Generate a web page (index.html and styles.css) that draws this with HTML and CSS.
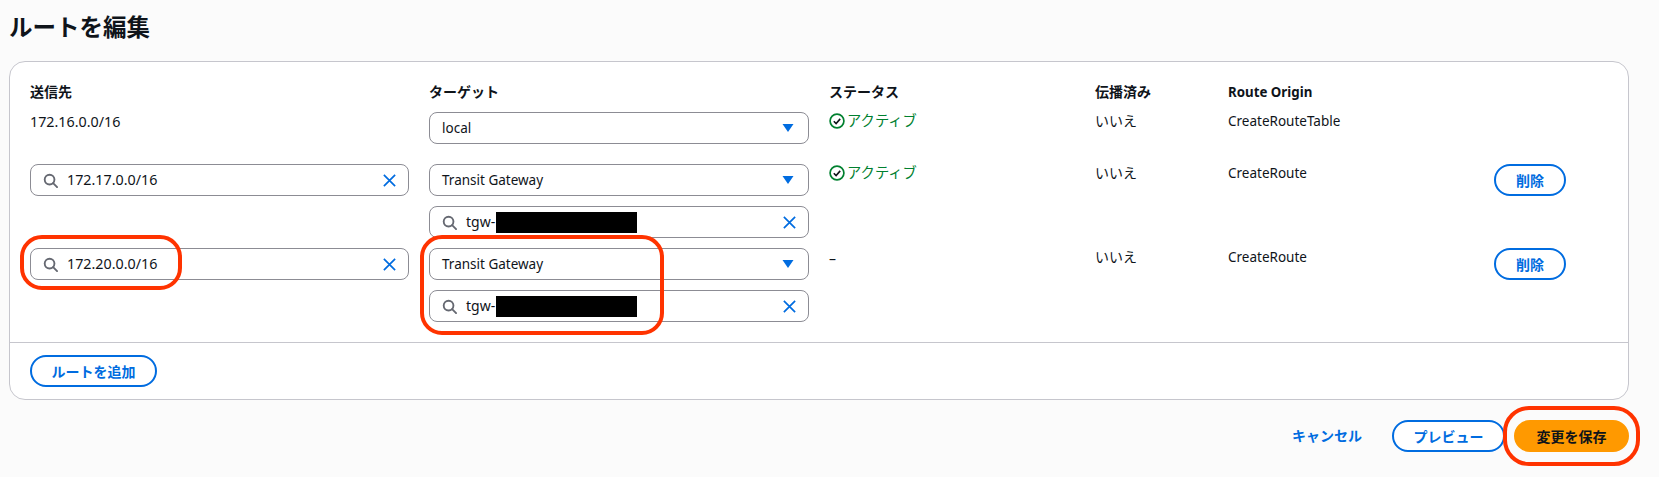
FILE: index.html
```html
<!DOCTYPE html>
<html lang="ja">
<head>
  <meta charset="UTF-8" />
  <meta name="viewport" content="width=device-width, initial-scale=1.0" />
  <title>ルートを編集</title>
  <link rel="stylesheet" href="styles.css">
</head>
<body>
  <svg class="icon-defs" width="0" height="0" aria-hidden="true">
    <symbol id="i-search" viewBox="0 0 16 16">
      <circle cx="7" cy="7" r="5.2" fill="none" stroke="currentColor" stroke-width="2" />
      <path d="M10.8 10.8L15 15" fill="none" stroke="currentColor" stroke-width="2" stroke-linecap="round" />
    </symbol>
    <symbol id="i-clear" viewBox="0 0 16 16">
      <path d="M2 2l12 12M14 2L2 14" fill="none" stroke="currentColor" stroke-width="1.8" />
    </symbol>
    <symbol id="i-caret" viewBox="0 0 12 10">
      <path d="M0.5 1h11L6 9z" fill="currentColor" />
    </symbol>
    <symbol id="i-ok" viewBox="0 0 16 16">
      <circle cx="8" cy="8" r="6.9" fill="none" stroke="currentColor" stroke-width="1.7" />
      <path d="M4.8 8.2l2.3 2.3 4.1-4.6" fill="none" stroke="#0f141a" stroke-width="1.6" />
    </symbol>
  </svg>

  <h1 class="title">ルートを編集</h1>

  <section class="card">
    <div class="routes">
      <div class="row row-head">
        <div>送信先</div>
        <div>ターゲット</div>
        <div>ステータス</div>
        <div>伝播済み</div>
        <div class="origin-head">Route Origin</div>
      </div>

      <div class="row row-first">
        <div class="cidr">172.16.0.0/16</div>
        <div class="stack">
          <div class="field select">
            <span class="value">local</span>
            <svg class="caret"><use href="#i-caret" /></svg>
          </div>
        </div>
        <div class="status"><svg class="ok"><use href="#i-ok" /></svg>アクティブ</div>
        <div class="text">いいえ</div>
        <div class="text origin">CreateRouteTable</div>
      </div>

      <div class="row">
        <div class="field">
          <svg class="search"><use href="#i-search" /></svg>
          <span class="cidr">172.17.0.0/16</span>
          <svg class="clear"><use href="#i-clear" /></svg>
        </div>
        <div class="stack">
          <div class="field select">
            <span class="value">Transit Gateway</span>
            <svg class="caret"><use href="#i-caret" /></svg>
          </div>
          <div class="field">
            <svg class="search"><use href="#i-search" /></svg>
            <span class="tgw">tgw-</span><span class="redacted"></span>
            <svg class="clear"><use href="#i-clear" /></svg>
          </div>
        </div>
        <div class="status"><svg class="ok"><use href="#i-ok" /></svg>アクティブ</div>
        <div class="text">いいえ</div>
        <div class="text origin">CreateRoute</div>
        <button class="btn btn-delete">削除</button>
      </div>

      <div class="row">
        <div class="field">
          <svg class="search"><use href="#i-search" /></svg>
          <span class="cidr">172.20.0.0/16</span>
          <svg class="clear"><use href="#i-clear" /></svg>
        </div>
        <div class="stack">
          <div class="field select">
            <span class="value">Transit Gateway</span>
            <svg class="caret"><use href="#i-caret" /></svg>
          </div>
          <div class="field">
            <svg class="search"><use href="#i-search" /></svg>
            <span class="tgw">tgw-</span><span class="redacted"></span>
            <svg class="clear"><use href="#i-clear" /></svg>
          </div>
        </div>
        <div class="dash">–</div>
        <div class="text">いいえ</div>
        <div class="text origin">CreateRoute</div>
        <button class="btn btn-delete">削除</button>
      </div>
    </div>

    <div class="card-footer">
      <button class="btn btn-add">ルートを追加</button>
    </div>
  </section>

  <div class="actions">
    <a class="cancel" href="#">キャンセル</a>
    <button class="btn btn-preview">プレビュー</button>
    <button class="btn btn-save">変更を保存</button>
  </div>

  <!-- red annotations drawn over the screenshot -->
  <div class="mark mark-dest"></div>
  <div class="mark mark-target"></div>
  <div class="mark mark-save"></div>
</body>
</html>
```

FILE: styles.css
```css
* {
  margin: 0;
  padding: 0;
  box-sizing: border-box;
}

body {
  position: relative;
  height: 477px;
  padding: 11px 30px 0 9px;
  overflow: hidden;
  background: #fbfbfb;
  color: #0f141a;
  font-family: "Noto Sans", "Noto Sans CJK JP", sans-serif;
  font-size: 14px;
  line-height: 20px;
}

.icon-defs {
  position: absolute;
}

.title {
  height: 30px;
  margin-bottom: 20px;
  font-family: "Noto Sans CJK JP", sans-serif;
  font-size: 23.5px;
  font-weight: 700;
  line-height: 30px;
}

.card {
  background: #fff;
  border: 1px solid #c6c6cd;
  border-radius: 16px;
}

.routes {
  display: flex;
  flex-direction: column;
  gap: 10px;
  padding: 20px 20px;
  border-bottom: 1px solid #c6c6cd;
}

.row {
  display: grid;
  grid-template-columns: 379px 380px 246px 113px 246px 72px;
  column-gap: 20px;
  align-items: start;
}

.row-head {
  font-weight: 700;
}

.origin-head {
  font-size: 13.3px;
}

.row-first {
  margin-bottom: 10px;
}

.cidr {
  font-size: 14.3px;
}

.text {
  margin-top: -1px;
}

.origin {
  font-size: 13.5px;
}

.dash {
  margin-top: 1px;
}

.stack {
  display: flex;
  flex-direction: column;
  gap: 10px;
}

.field {
  display: flex;
  align-items: center;
  height: 32px;
  padding: 0 12px;
  background: #fff;
  border: 1px solid #8c8c94;
  border-radius: 8px;
}

.select {
  font-size: 13.5px;
}

.search {
  width: 15px;
  height: 15px;
  margin-right: 9px;
  color: #656871;
}

.clear {
  width: 15px;
  height: 15px;
  margin-left: auto;
  margin-right: -1px;
  color: #006ce0;
}

.caret {
  width: 12px;
  height: 10px;
  margin-left: auto;
  margin-right: 2px;
  color: #006ce0;
}

.tgw {
  margin-right: 1px;
}

.redacted {
  width: 141px;
  height: 21px;
  background: #000;
}

.status {
  display: flex;
  align-items: center;
  gap: 2px;
  margin-top: -1px;
  color: #00802f;
  font-size: 14.3px;
}

.ok {
  width: 16px;
  height: 16px;
  color: #00802f;
}

.btn {
  height: 32px;
  padding: 0 20px;
  background: #fff;
  border: 2px solid #006ce0;
  border-radius: 20px;
  color: #006ce0;
  font-family: inherit;
  font-size: 14px;
  font-weight: 700;
  white-space: nowrap;
}

.btn-delete {
  width: 72px;
  padding: 0;
}

.card-footer {
  padding: 12px 20px;
}

.btn-add {
  display: block;
  width: 127px;
  padding: 0;
}

.actions {
  display: flex;
  justify-content: flex-end;
  align-items: center;
  margin-top: 20px;
}

.cancel {
  margin-right: 30px;
  color: #006ce0;
  font-weight: 700;
  text-decoration: none;
}

.btn-preview {
  width: 113px;
  margin-right: 9px;
  padding: 0;
}

.btn-save {
  width: 115px;
  padding: 0;
  background: #ff9900;
  border-color: #ff9900;
  color: #0f141a;
}

.mark {
  position: absolute;
  border: 4.5px solid #ff3300;
  border-radius: 22px;
}

.mark-dest {
  left: 20px;
  top: 235px;
  width: 162px;
  height: 55px;
}

.mark-target {
  left: 420px;
  top: 235px;
  width: 244px;
  height: 100px;
}

.mark-save {
  left: 1503px;
  top: 406px;
  width: 137px;
  height: 60px;
  border-radius: 26px;
}
```
